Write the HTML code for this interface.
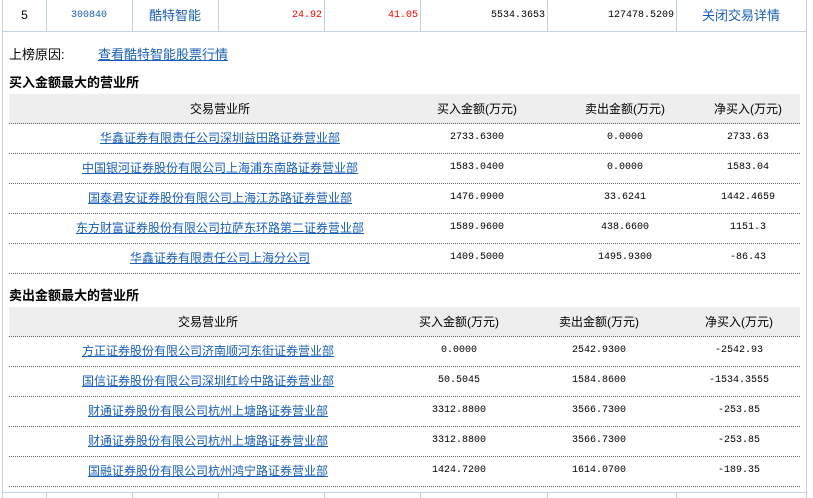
<!DOCTYPE html><html><head><meta charset="utf-8"><style>
body{margin:0;width:813px;height:498px;overflow:hidden;background:#fff;font-family:"Liberation Sans","Noto Sans CJK SC",sans-serif;font-size:12px;color:#000;position:relative}
.a{position:absolute}
.c{position:absolute;width:240px;text-align:center;line-height:30px;height:30px}
.l{color:#1a5fb4;text-decoration:underline}
.m{font-family:"Liberation Mono","Noto Sans CJK SC",monospace;font-size:10px}
.hd{position:absolute;left:9px;width:791px;height:29px;background:#eee;border-bottom:1px dotted #666}
.ln{position:absolute;left:9px;width:791px;border-top:1px dotted #666;height:0}
.v{position:absolute;top:0;width:1px;height:31px;background:#bfd3e0}
</style></head><body>
<div class="a" style="left:2px;top:0;width:805px;height:31px;border-bottom:1px solid #bfd3e0"></div>
<div class="a" style="left:2px;top:0;width:1px;height:498px;background:#bfd3e0"></div>
<div class="a" style="left:806px;top:0;width:1px;height:498px;background:#bfd3e0"></div>
<div class="v" style="left:46px"></div><div class="v" style="left:132px"></div><div class="v" style="left:218px"></div><div class="v" style="left:324px"></div><div class="v" style="left:420px"></div><div class="v" style="left:547px"></div><div class="v" style="left:676px"></div>
<div class="a" style="left:3px;width:43px;top:0;line-height:31px;text-align:center">5</div>
<div class="a m" style="left:46px;width:86px;top:0;line-height:31px;text-align:center;color:#1a5fb4">300840</div>
<div class="a" style="left:132px;width:86px;top:0;line-height:31px;text-align:center;color:#1a5fb4;font-size:13px">酷特智能</div>
<div class="a m" style="left:218px;width:104px;top:0;line-height:31px;text-align:right;color:#e00">24.92</div>
<div class="a m" style="left:324px;width:94px;top:0;line-height:31px;text-align:right;color:#e00">41.05</div>
<div class="a m" style="left:420px;width:125px;top:0;line-height:31px;text-align:right">5534.3653</div>
<div class="a m" style="left:547px;width:127px;top:0;line-height:31px;text-align:right">127478.5209</div>
<div class="a" style="left:676px;width:130px;top:0;line-height:31px;text-align:center;color:#1a5fb4;font-size:13px">关闭交易详情</div>
<div class="a" style="left:9px;top:44px;font-size:13px">上榜原因:</div>
<div class="a l" style="left:98px;top:44px;font-size:13px">查看酷特智能股票行情</div>
<div class="a" style="left:9px;top:72px;font-size:13px;font-weight:bold">买入金额最大的营业所</div>
<div class="hd" style="top:94px"></div>
<div class="c" style="left:100px;top:94px">交易营业所</div>
<div class="c" style="left:357px;top:94px">买入金额(万元)</div>
<div class="c" style="left:505px;top:94px">卖出金额(万元)</div>
<div class="c" style="left:628px;top:94px">净买入(万元)</div>
<div class="ln" style="top:153px"></div><div class="ln" style="top:183px"></div><div class="ln" style="top:213px"></div><div class="ln" style="top:243px"></div><div class="ln" style="top:273px"></div>
<div class="c l" style="left:60px;width:320px;top:123px">华鑫证券有限责任公司深圳益田路证券营业部</div><div class="c m" style="left:357px;top:123px">2733.6300</div><div class="c m" style="left:505px;top:123px">0.0000</div><div class="c m" style="left:628px;top:123px">2733.63</div>
<div class="c l" style="left:60px;width:320px;top:153px">中国银河证券股份有限公司上海浦东南路证券营业部</div><div class="c m" style="left:357px;top:153px">1583.0400</div><div class="c m" style="left:505px;top:153px">0.0000</div><div class="c m" style="left:628px;top:153px">1583.04</div>
<div class="c l" style="left:60px;width:320px;top:183px">国泰君安证券股份有限公司上海江苏路证券营业部</div><div class="c m" style="left:357px;top:183px">1476.0900</div><div class="c m" style="left:505px;top:183px">33.6241</div><div class="c m" style="left:628px;top:183px">1442.4659</div>
<div class="c l" style="left:40px;width:360px;top:213px">东方财富证券股份有限公司拉萨东环路第二证券营业部</div><div class="c m" style="left:357px;top:213px">1589.9600</div><div class="c m" style="left:505px;top:213px">438.6600</div><div class="c m" style="left:628px;top:213px">1151.3</div>
<div class="c l" style="left:60px;width:320px;top:243px">华鑫证券有限责任公司上海分公司</div><div class="c m" style="left:357px;top:243px">1409.5000</div><div class="c m" style="left:505px;top:243px">1495.9300</div><div class="c m" style="left:628px;top:243px">-86.43</div>
<div class="a" style="left:9px;top:285px;font-size:13px;font-weight:bold">卖出金额最大的营业所</div>
<div class="hd" style="top:307px"></div>
<div class="c" style="left:88px;top:307px">交易营业所</div>
<div class="c" style="left:339px;top:307px">买入金额(万元)</div>
<div class="c" style="left:479px;top:307px">卖出金额(万元)</div>
<div class="c" style="left:619px;top:307px">净买入(万元)</div>
<div class="ln" style="top:366px"></div><div class="ln" style="top:396px"></div><div class="ln" style="top:426px"></div><div class="ln" style="top:456px"></div><div class="ln" style="top:486px"></div>
<div class="c l" style="left:48px;width:320px;top:336px">方正证券股份有限公司济南顺河东街证券营业部</div><div class="c m" style="left:339px;top:336px">0.0000</div><div class="c m" style="left:479px;top:336px">2542.9300</div><div class="c m" style="left:619px;top:336px">-2542.93</div>
<div class="c l" style="left:48px;width:320px;top:366px">国信证券股份有限公司深圳红岭中路证券营业部</div><div class="c m" style="left:339px;top:366px">50.5045</div><div class="c m" style="left:479px;top:366px">1584.8600</div><div class="c m" style="left:619px;top:366px">-1534.3555</div>
<div class="c l" style="left:48px;width:320px;top:396px">财通证券股份有限公司杭州上塘路证券营业部</div><div class="c m" style="left:339px;top:396px">3312.8800</div><div class="c m" style="left:479px;top:396px">3566.7300</div><div class="c m" style="left:619px;top:396px">-253.85</div>
<div class="c l" style="left:48px;width:320px;top:426px">财通证券股份有限公司杭州上塘路证券营业部</div><div class="c m" style="left:339px;top:426px">3312.8800</div><div class="c m" style="left:479px;top:426px">3566.7300</div><div class="c m" style="left:619px;top:426px">-253.85</div>
<div class="c l" style="left:48px;width:320px;top:456px">国融证券股份有限公司杭州鸿宁路证券营业部</div><div class="c m" style="left:339px;top:456px">1424.7200</div><div class="c m" style="left:479px;top:456px">1614.0700</div><div class="c m" style="left:619px;top:456px">-189.35</div>
<div class="a" style="left:2px;top:492px;width:805px;border-top:1px solid #bfd3e0"></div>
<div class="a" style="left:46px;top:492px;width:1px;height:6px;background:#bfd3e0"></div><div class="a" style="left:132px;top:492px;width:1px;height:6px;background:#bfd3e0"></div><div class="a" style="left:218px;top:492px;width:1px;height:6px;background:#bfd3e0"></div><div class="a" style="left:324px;top:492px;width:1px;height:6px;background:#bfd3e0"></div><div class="a" style="left:420px;top:492px;width:1px;height:6px;background:#bfd3e0"></div><div class="a" style="left:547px;top:492px;width:1px;height:6px;background:#bfd3e0"></div><div class="a" style="left:676px;top:492px;width:1px;height:6px;background:#bfd3e0"></div>
</body></html>
